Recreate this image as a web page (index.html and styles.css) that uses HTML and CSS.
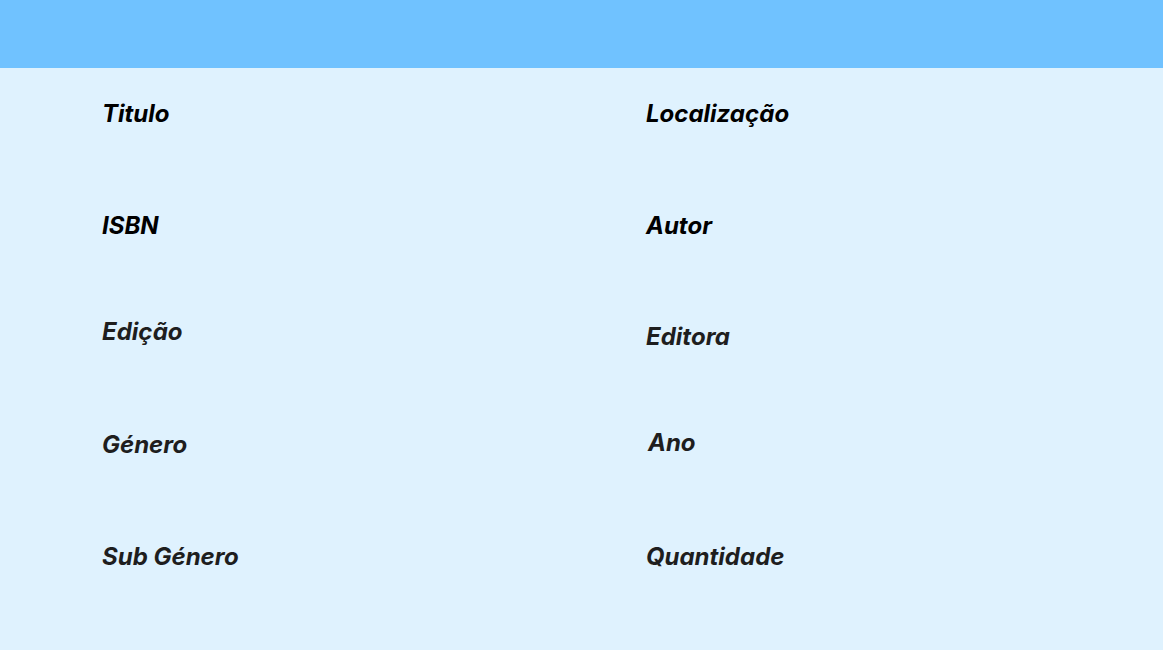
FILE: index.html
```html
<!DOCTYPE html>
<html lang="pt">
<head>
<meta charset="utf-8">
<title>Livro</title>
<link rel="stylesheet" href="styles.css">
</head>
<body>
<header class="topbar"></header>
<main class="form">
  <div class="col col-left">
    <div class="label dark r1">Titulo</div>
    <div class="label dark l2">ISBN</div>
    <div class="label l3">Edição</div>
    <div class="label l4">Género</div>
    <div class="label l5">Sub Género</div>
  </div>
  <div class="col col-right">
    <div class="label dark r1">Localização</div>
    <div class="label dark r2">Autor</div>
    <div class="label r3">Editora</div>
    <div class="label r4 ano">Ano</div>
    <div class="label r5">Quantidade</div>
  </div>
</main>
</body>
</html>
```

FILE: styles.css
```css
html, body {
  margin: 0;
  padding: 0;
}
body {
  background: #dff2fe;
  width: 1163px;
  height: 650px;
  overflow: hidden;
  font-family: Inter, "Noto Sans", sans-serif;
}
.topbar {
  height: 68px;
  background: #70c2ff;
}
.form {
  display: grid;
  grid-template-columns: 544px 1fr;
  padding-left: 102px;
}
.col {
  display: flex;
  flex-direction: column;
}
.label {
  font-size: 24px;
  line-height: 29px;
  height: 29px;
  font-style: italic;
  font-weight: 700;
  color: #1e1e1e;
  white-space: nowrap;
}
.label.dark {
  color: #000;
}
.r1 { margin-top: 30.5px; }
.l2 { margin-top: 83px; }
.l3 { margin-top: 77.25px; }
.l4 { margin-top: 83.75px; }
.l5 { margin-top: 83.25px; }
.r2 { margin-top: 83px; }
.r3 { margin-top: 82px; }
.r4 { margin-top: 77px; }
.r5 { margin-top: 85px; }
.ano { padding-left: 2px; }
```
